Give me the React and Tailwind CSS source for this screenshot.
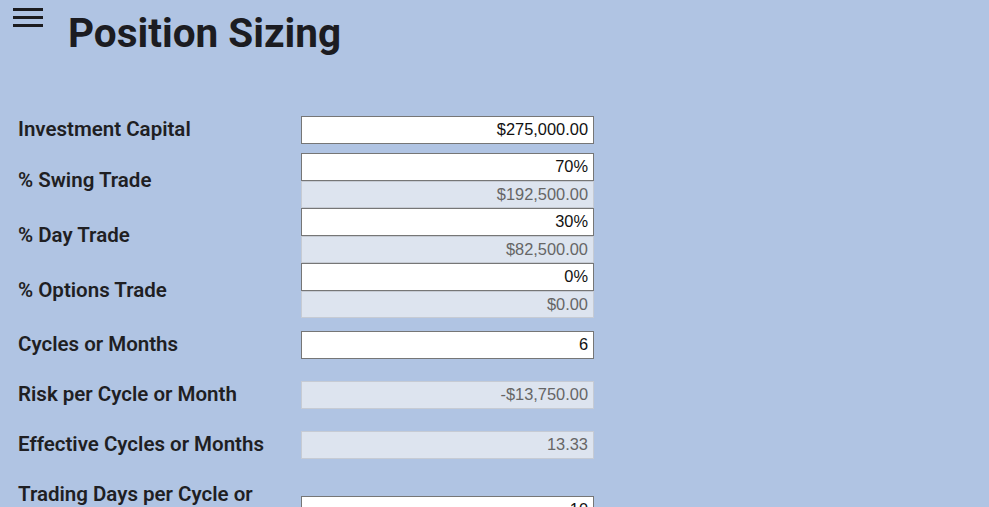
import React from "react";

const Field = ({ value, readOnly }) => (
  <div
    className={
      readOnly
        ? "h-[27.5px] w-[293px] border border-[#c6cbd4] bg-[#dde4ef] pr-[5px] text-right text-[16.4px] leading-[25.5px] text-[#666666]"
        : "h-[27.5px] w-[293px] border border-[#767676] bg-white pr-[5px] text-right text-[16.4px] leading-[25.5px] text-[#111111]"
    }
    style={{ fontFamily: '"Liberation Sans", Arial, sans-serif' }}
  >
    {value}
  </div>
);

const Row = ({ label, className = "", labelClass = "leading-[24px] pb-[2px]", children }) => (
  <div className={`flex items-center ${className}`}>
    <div className={`w-[283px] pr-[20px] text-[20.5px] font-semibold text-[#1f1f23] ${labelClass}`}>
      {label}
    </div>
    <div className="flex flex-col">{children}</div>
  </div>
);

export default function App() {
  return (
    <div
      className="min-h-screen bg-[#b0c4e3] overflow-hidden"
      style={{ fontFamily: "Roboto, 'Noto Sans', sans-serif" }}
    >
      {/* Header */}
      <div className="flex h-[53px]">
        <div className="ml-[13px] mt-[8px] flex flex-col gap-[5px]">
          <span className="block h-[3px] w-[30px] bg-[#1c1c1f]"></span>
          <span className="block h-[3px] w-[30px] bg-[#1c1c1f]"></span>
          <span className="block h-[3px] w-[30px] bg-[#1c1c1f]"></span>
        </div>
        <h1 className="ml-[25px] mt-[13px] text-[40.5px] font-bold leading-none text-[#1c1c21]">
          Position Sizing
        </h1>
      </div>

      {/* Form */}
      <div className="mt-[63px] pl-[18px]">
        <Row label="Investment Capital">
          <Field value="$275,000.00" />
        </Row>
        <Row label="% Swing Trade" className="mt-[9.5px]">
          <Field value="70%" />
          <Field value="$192,500.00" readOnly />
        </Row>
        <Row label="% Day Trade">
          <Field value="30%" />
          <Field value="$82,500.00" readOnly />
        </Row>
        <Row label="% Options Trade">
          <Field value="0%" />
          <Field value="$0.00" readOnly />
        </Row>
        <Row label="Cycles or Months" className="mt-[13px]">
          <Field value="6" />
        </Row>
        <Row label="Risk per Cycle or Month" className="mt-[22.5px]">
          <Field value="-$13,750.00" readOnly />
        </Row>
        <Row label="Effective Cycles or Months" className="mt-[22.5px]">
          <Field value="13.33" readOnly />
        </Row>
        <Row
          label="Trading Days per Cycle or Month"
          className="mt-[19.25px]"
          labelClass="leading-[32px]"
        >
          <Field value="10" />
        </Row>
      </div>
    </div>
  );
}
